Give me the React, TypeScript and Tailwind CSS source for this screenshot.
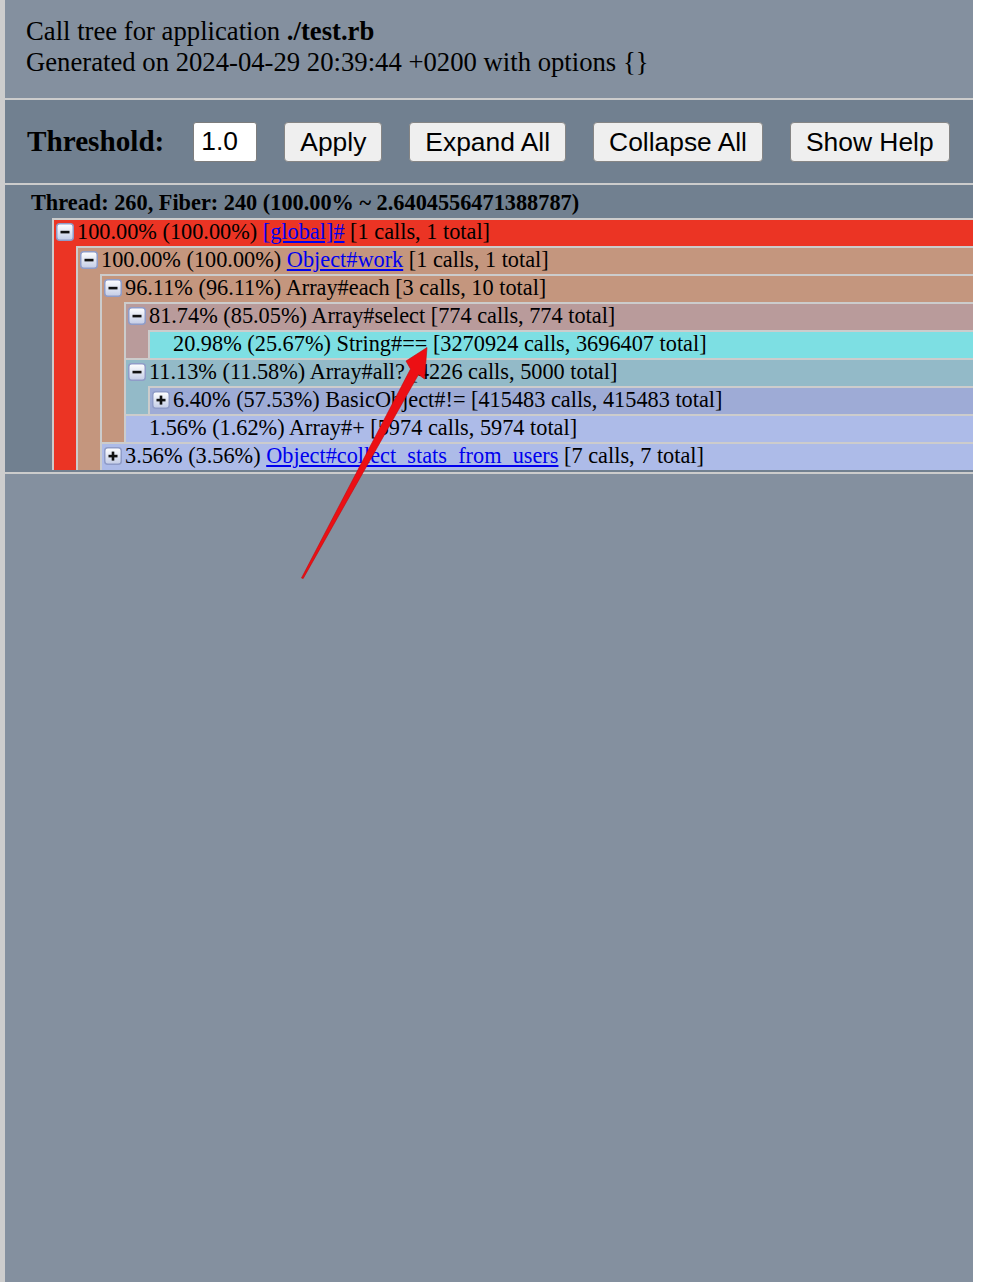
import React from "react"

type Node = {
  color: string
  self: string
  total: string
  name: string
  link?: boolean
  calls: string
  icon?: "minus" | "plus"
  children?: Node[]
}

const tree: Node = {
  color: "bg-[#eb3424]",
  self: "100.00%",
  total: "(100.00%)",
  name: "[global]#",
  link: true,
  calls: "[1 calls, 1 total]",
  icon: "minus",
  children: [
    {
      color: "bg-[#c4967e]",
      self: "100.00%",
      total: "(100.00%)",
      name: "Object#work",
      link: true,
      calls: "[1 calls, 1 total]",
      icon: "minus",
      children: [
        {
          color: "bg-[#c4967e]",
          self: "96.11%",
          total: "(96.11%)",
          name: "Array#each",
          calls: "[3 calls, 10 total]",
          icon: "minus",
          children: [
            {
              color: "bg-[#b99b9b]",
              self: "81.74%",
              total: "(85.05%)",
              name: "Array#select",
              calls: "[774 calls, 774 total]",
              icon: "minus",
              children: [
                {
                  color: "bg-[#7ddfe3]",
                  self: "20.98%",
                  total: "(25.67%)",
                  name: "String#==",
                  calls: "[3270924 calls, 3696407 total]",
                },
              ],
            },
            {
              color: "bg-[#93bac8]",
              self: "11.13%",
              total: "(11.58%)",
              name: "Array#all?",
              calls: "[4226 calls, 5000 total]",
              icon: "minus",
              children: [
                {
                  color: "bg-[#9eabd6]",
                  self: "6.40%",
                  total: "(57.53%)",
                  name: "BasicObject#!=",
                  calls: "[415483 calls, 415483 total]",
                  icon: "plus",
                },
              ],
            },
            {
              color: "bg-[#adbbe8]",
              self: "1.56%",
              total: "(1.62%)",
              name: "Array#+",
              calls: "[5974 calls, 5974 total]",
            },
          ],
        },
        {
          color: "bg-[#adbbe8]",
          self: "3.56%",
          total: "(3.56%)",
          name: "Object#collect_stats_from_users",
          link: true,
          calls: "[7 calls, 7 total]",
          icon: "plus",
        },
      ],
    },
  ],
}

function ToggleIcon({ kind }: { kind: "minus" | "plus" }) {
  return (
    <svg width="18" height="18" viewBox="0 0 18 18" className="shrink-0">
      <defs>
        <linearGradient id={`g-${kind}`} x1="0" y1="0" x2="0" y2="1">
          <stop offset="0" stopColor="#ffffff" />
          <stop offset="1" stopColor="#c3cce6" />
        </linearGradient>
      </defs>
      <rect x="0.75" y="0.75" width="16.5" height="16.5" rx="3" fill={`url(#g-${kind})`} stroke="#8f9cc8" strokeWidth="1.5" />
      <rect x="4.5" y="7.8" width="9" height="2.6" fill="#111" />
      {kind === "plus" && <rect x="7.7" y="4.6" width="2.6" height="9" fill="#111" />}
    </svg>
  )
}

function TreeNode({ node }: { node: Node }) {
  return (
    <div className={`border-l-2 border-[#cccccc] ${node.color}`}>
      <div className="flex items-center h-[28px] border-t-2 border-[#cccccc] pl-[2px] pb-[2px] whitespace-nowrap">
        {node.icon ? <ToggleIcon kind={node.icon} /> : <span className="w-[18px] shrink-0" />}
        <span className="ml-[3px]">
          {node.self} {node.total}{" "}
          {node.link ? <a className="text-[#0000ee] underline">{node.name}</a> : node.name} {node.calls}
        </span>
      </div>
      {node.children && (
        <div className="ml-[22px]">
          {node.children.map((c, i) => (
            <TreeNode key={i} node={c} />
          ))}
        </div>
      )}
    </div>
  )
}

const btn =
  "h-[40px] px-[15px] bg-[#efefef] border border-[#858585] rounded-[4px] text-[26.4px] text-black font-['Liberation_Sans',Arial,sans-serif]"

export default function App() {
  return (
    <div className="relative min-h-[1282px] w-[994px] bg-white">
      <div className="w-[973px] min-h-[1282px] border-l-[5px] border-[#cdcdcd] bg-[#84909f] font-['Liberation_Serif','Times_New_Roman',serif] text-black">
        <div className="pl-[21px] pt-[16px] pb-[20px] text-[26.7px] leading-[31px] border-b-2 border-[#cccccc]">
          <div>
            Call tree for application <b>./test.rb</b>
          </div>
          <div>Generated on 2024-04-29 20:39:44 +0200 with options {"{}"}</div>
        </div>

        <div className="flex items-center h-[85px] pl-[22px] bg-[#718090] border-b-2 border-[#cccccc]">
          <span className="font-bold text-[29.2px] mr-[29px]">Threshold:</span>
          <input
            defaultValue="1.0"
            className="w-[64px] h-[40px] bg-white border border-[#7d7d7d] rounded-[3px] px-[7px] text-[26.4px] font-['Liberation_Sans',Arial,sans-serif] mr-[27px]"
          />
          <div className="flex gap-[27px]">
            <button type="button" className={btn}>Apply</button>
            <button type="button" className={btn}>Expand All</button>
            <button type="button" className={btn}>Collapse All</button>
            <button type="button" className={btn}>Show Help</button>
          </div>
        </div>

        <div className="bg-[#718090] pb-[2px] border-b-2 border-[#cccccc]">
          <div className="pl-[26px] pt-[5px] pb-[2px] leading-[26px] text-[22.3px] font-bold whitespace-nowrap">
            Thread: 260, Fiber: 240 (100.00% ~ 2.6404556471388787)
          </div>
          <div className="ml-[47px] text-[22.3px]">
            <TreeNode node={tree} />
          </div>
        </div>
      </div>

      <svg className="absolute left-0 top-0 pointer-events-none" width="994" height="1282" viewBox="0 0 994 1282">
        <polygon
          points="301.5,578 410.5,369 406,361 427,347.5 424.5,379 418.5,374.5 303.2,578.5"
          fill="#ec0f14"
          stroke="#c4080c"
          strokeWidth="0.6"
          strokeLinejoin="round"
        />
      </svg>
    </div>
  )
}
